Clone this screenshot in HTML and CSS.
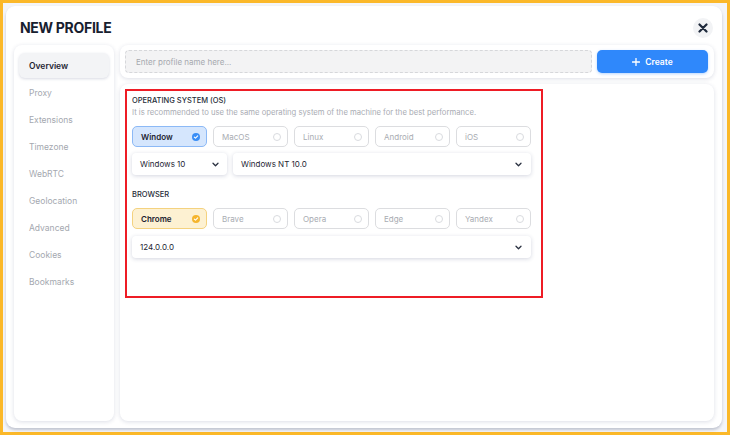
FILE: index.html
```html
<!DOCTYPE html>
<html>
<head>
<meta charset="utf-8">
<link rel="stylesheet" href="styles.css">
</head>
<body>
<div class="frame">
  <div class="modal">
    <div class="header">
      <h1 class="title">NEW PROFILE</h1>
      <button class="close" aria-label="Close">
        <svg width="10" height="10" viewBox="0 0 10 10"><path d="M1.5 1.5 L8.5 8.5 M8.5 1.5 L1.5 8.5" stroke="#1f2a3c" stroke-width="2.2" stroke-linecap="round"/></svg>
      </button>
    </div>
    <div class="body">
      <nav class="sidebar">
        <div class="nav-item active">Overview</div>
        <div class="nav-item">Proxy</div>
        <div class="nav-item">Extensions</div>
        <div class="nav-item">Timezone</div>
        <div class="nav-item">WebRTC</div>
        <div class="nav-item">Geolocation</div>
        <div class="nav-item">Advanced</div>
        <div class="nav-item">Cookies</div>
        <div class="nav-item">Bookmarks</div>
      </nav>
      <div class="main">
        <div class="card topbar">
          <div class="name-input">Enter profile name here...</div>
          <button class="create-btn">
            <svg width="8" height="8" viewBox="0 0 8 8"><path d="M4 0.5 V7.5 M0.5 4 H7.5" stroke="#fff" stroke-width="1.3" stroke-linecap="round"/></svg>
            <span>Create</span>
          </button>
        </div>
        <div class="card content">
          <div class="highlight">
            <div class="section-title">OPERATING SYSTEM (OS)</div>
            <div class="section-sub">It is recommended to use the same operating system of the machine for the best performance.</div>
            <div class="options">
              <div class="opt opt-blue"><span>Window</span><span class="dot dot-blue"><svg width="8" height="8" viewBox="0 0 8 8"><path d="M2.3 4.1 L3.5 5.2 L5.7 2.9" stroke="#fff" stroke-width="1.1" fill="none" stroke-linecap="round" stroke-linejoin="round"/></svg></span></div>
              <div class="opt"><span>MacOS</span><span class="dot"></span></div>
              <div class="opt"><span>Linux</span><span class="dot"></span></div>
              <div class="opt"><span>Android</span><span class="dot"></span></div>
              <div class="opt"><span>iOS</span><span class="dot"></span></div>
            </div>
            <div class="selects">
              <div class="select select-small"><span>Windows 10</span><svg class="chev" width="7" height="5" viewBox="0 0 7 5"><path d="M1 1.2 L3.5 3.7 L6 1.2" stroke="#2a3140" stroke-width="1.3" fill="none" stroke-linecap="round" stroke-linejoin="round"/></svg></div>
              <div class="select select-grow"><span>Windows NT 10.0</span><svg class="chev" width="7" height="5" viewBox="0 0 7 5"><path d="M1 1.2 L3.5 3.7 L6 1.2" stroke="#2a3140" stroke-width="1.3" fill="none" stroke-linecap="round" stroke-linejoin="round"/></svg></div>
            </div>
            <div class="section-title browser-title">BROWSER</div>
            <div class="options options-browser">
              <div class="opt opt-orange"><span>Chrome</span><span class="dot dot-orange"><svg width="8" height="8" viewBox="0 0 8 8"><path d="M2.3 4.1 L3.5 5.2 L5.7 2.9" stroke="#fff" stroke-width="1.1" fill="none" stroke-linecap="round" stroke-linejoin="round"/></svg></span></div>
              <div class="opt"><span>Brave</span><span class="dot"></span></div>
              <div class="opt"><span>Opera</span><span class="dot"></span></div>
              <div class="opt"><span>Edge</span><span class="dot"></span></div>
              <div class="opt"><span>Yandex</span><span class="dot"></span></div>
            </div>
            <div class="selects selects-browser">
              <div class="select select-grow"><span>124.0.0.0</span><svg class="chev" width="7" height="5" viewBox="0 0 7 5"><path d="M1 1.2 L3.5 3.7 L6 1.2" stroke="#2a3140" stroke-width="1.3" fill="none" stroke-linecap="round" stroke-linejoin="round"/></svg></div>
            </div>
          </div>
        </div>
      </div>
    </div>
  </div>
</div>
</body>
</html>
```

FILE: styles.css
```css
* { box-sizing: border-box; }
html, body { margin: 0; padding: 0; }
body {
  width: 730px;
  height: 435px;
  font-family: Inter, "Noto Sans", sans-serif;
  color: #1e2533;
  overflow: hidden;
}
.frame {
  width: 730px;
  height: 435px;
  border: 3px solid #fbb829;
  background: #f4f5f8;
  padding: 3px 5px 4px 3px;
}
.modal {
  height: 100%;
  background: #ffffff;
  border-radius: 9px;
  box-shadow: 0 2px 3px rgba(40, 50, 90, 0.25);
  padding: 12px 8px 7px 8px;
  display: flex;
  flex-direction: column;
}
.header {
  display: flex;
  justify-content: space-between;
  align-items: center;
  height: 20px;
  margin-bottom: 7px;
  padding-left: 6px;
  padding-right: 1px;
}
.title {
  margin: 0;
  font-size: 14px;
  font-weight: 700;
  letter-spacing: -0.3px;
  line-height: 17px;
  margin-top: -1px;
  color: #17202f;
}
.close {
  width: 20px;
  height: 20px;
  border-radius: 50%;
  border: none;
  background: #f2f3f5;
  padding: 0;
  display: flex;
  align-items: center;
  justify-content: center;
}
.body {
  flex: 1;
  display: flex;
  gap: 6px;
  min-height: 0;
}
.sidebar {
  width: 100px;
  background: #fff;
  border-radius: 8px;
  box-shadow: 0 1px 4px rgba(40, 50, 100, 0.16);
  padding: 8px 5px;
  display: flex;
  flex-direction: column;
  gap: 2px;
}
.nav-item {
  height: 25px;
  display: flex;
  align-items: center;
  padding-left: 10px;
  font-size: 8.5px;
  color: #a4a8af;
  border-radius: 6px;
}
.nav-item.active {
  background: #f3f4f6;
  box-shadow: 0 1px 3px rgba(40, 50, 100, 0.18);
  color: #1e2533;
  font-weight: 600;
}
.main {
  flex: 1;
  display: flex;
  flex-direction: column;
  gap: 6px;
}
.card {
  background: #fff;
  border-radius: 8px;
  box-shadow: 0 1px 4px rgba(40, 50, 100, 0.16);
}
.topbar {
  height: 33px;
  padding: 5px 6px 5px 5px;
  display: flex;
  gap: 5px;
}
.name-input {
  flex: 1;
  height: 23px;
  background: #f3f3f4;
  border: 1px dashed #d6d7da;
  border-radius: 4px;
  display: flex;
  align-items: center;
  padding-left: 10px;
  font-size: 8px;
  color: #a6a9af;
}
.create-btn {
  width: 111px;
  height: 23px;
  border: none;
  border-radius: 5px;
  background: #2f88fb;
  box-shadow: 0 1px 3px rgba(47, 136, 251, 0.35);
  color: #fff;
  font-family: inherit;
  font-size: 8.5px;
  font-weight: 600;
  display: flex;
  align-items: center;
  justify-content: center;
  gap: 5px;
  padding: 0;
}
.content {
  flex: 1;
  padding: 5px;
}
.highlight {
  width: 418px;
  height: 209px;
  border: 2px solid #ee1c25;
  padding: 4px 10px 0 5px;
}
.section-title {
  font-size: 7.5px;
  font-weight: 500;
  line-height: 11px;
  color: #262c38;
}
.section-sub {
  margin-top: 1px;
  font-size: 7.7px;
  line-height: 12px;
  color: #a9acb3;
  white-space: nowrap;
}
.options {
  margin-top: 7px;
  display: flex;
  gap: 6px;
}
.options-browser { margin-top: 8px; }
.opt {
  width: 75px;
  height: 21px;
  border: 1px solid #dcdde0;
  border-radius: 5px;
  background: #fff;
  display: flex;
  align-items: center;
  justify-content: space-between;
  padding: 0 6px 0 8px;
  font-size: 8px;
  color: #a9acb2;
}
.opt-blue {
  background: #d5e6fd;
  border-color: #8cb9f6;
  color: #1b2230;
  font-weight: 600;
}
.opt-orange {
  background: #fdf1d2;
  border-color: #f4d27f;
  color: #1b2230;
  font-weight: 600;
}
.dot {
  width: 8px;
  height: 8px;
  border-radius: 50%;
  border: 1px solid #d9dbdf;
  display: flex;
  align-items: center;
  justify-content: center;
}
.dot svg { flex: none; }
.dot-blue { background: #3a8ef6; border: none; }
.dot-orange { background: #f5b52e; border: none; }
.selects {
  margin-top: 6px;
  display: flex;
  gap: 6px;
}
.selects-browser { margin-top: 7px; }
.select {
  height: 22px;
  background: #fff;
  border-radius: 4px;
  box-shadow: 0 1px 4px rgba(40, 50, 100, 0.2);
  display: flex;
  align-items: center;
  justify-content: space-between;
  padding: 0 8px 0 8px;
  font-size: 8px;
  color: #1e2533;
}
.select-small { width: 95px; }
.select-grow { flex: 1; padding-right: 9px; }
.browser-title { margin-top: 14px; }
```
